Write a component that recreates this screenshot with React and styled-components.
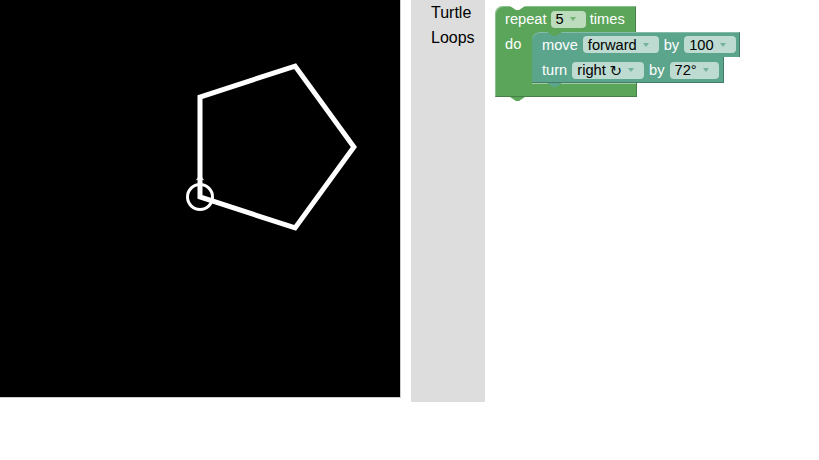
import React from "react";
import styled, { createGlobalStyle } from "styled-components";

const Global = createGlobalStyle`
  html, body { margin: 0; padding: 0; background: #fff; }
  body { font-family: "Liberation Sans", Arial, sans-serif; }
`;

const GREEN = "#5ba55b";
const TEAL = "#5ba58c";
const GREEN_FIELD = "#bddbbd";
const TEAL_FIELD = "#bddbd1";

const Page = styled.div`
  display: flex;
  align-items: flex-start;
  width: 819px;
  height: 460px;
`;

const Display = styled.div`
  width: 400px;
  height: 397px;
  background: #000;
  border-right: 1px solid #ccc;
  border-bottom: 1px solid #ccc;
  overflow: hidden;
  flex: none;
`;

const Toolbox = styled.div`
  margin-left: 10px;
  width: 74px;
  height: 402px;
  background: #ddd;
  flex: none;
  display: flex;
  flex-direction: column;
`;

const Category = styled.div`
  height: 25px;
  line-height: 25px;
  padding-left: 20px;
  font-size: 16px;
  color: #000;
`;

const Workspace = styled.div`
  position: relative;
  flex: 1;
  height: 402px;
  font-size: 14.67px;
`;

const RepeatBlock = styled.div`
  position: absolute;
  left: 10px;
  top: 6px;
  display: flex;
  flex-direction: column;
  align-items: flex-start;
`;

const notch = `polygon(0 0, 15px 0, 9px 4px, 6px 4px)`;
const tab = `polygon(0 0, 15px 0, 9px 4px, 6px 4px)`;

const Row = styled.div`
  position: relative;
  display: flex;
  align-items: center;
  gap: ${(p) => p.$gap}px;
  height: ${(p) => p.$h}px;
  padding: 0 ${(p) => p.$pr}px 0 10px;
  background: ${(p) => p.$color};
  color: #fff;
  white-space: nowrap;
  box-sizing: border-box;
`;

const TopRow = styled(Row)`
  border-radius: 8px 0 0 0;
  box-shadow: inset 1px 1px 0 rgba(255, 255, 255, 0.3), inset -1px 0 0 rgba(0, 0, 0, 0.22);
  &::before {
    content: "";
    position: absolute;
    left: 15px;
    top: 0;
    width: 15px;
    height: 4px;
    background: #fff;
    clip-path: ${notch};
  }
`;

const Middle = styled.div`
  position: relative;
  display: flex;
  align-items: stretch;
`;

const Arm = styled.div`
  position: relative;
  width: 37px;
  background: ${GREEN};
  color: #fff;
  padding-left: 10px;
  box-sizing: border-box;
  line-height: 25px;
  box-shadow: inset 1px 0 0 rgba(255, 255, 255, 0.3);
  &::after {
    content: "";
    position: absolute;
    right: -8px;
    top: 0;
    width: 8px;
    height: 8px;
    background: ${GREEN};
  }
`;

const Stack = styled.div`
  display: flex;
  flex-direction: column;
  align-items: flex-start;
`;

const StmtBlock = styled(Row)`
  z-index: 2;
  border-radius: ${(p) => (p.$first ? "8px 0 0 0" : "0")};
  box-shadow: inset -1px ${(p) => (p.$last ? "-1px" : "0")} 0 rgba(0, 0, 0, 0.25),
    inset 0 ${(p) => (p.$first ? "1px" : "0")} 0 rgba(255, 255, 255, 0.25);
  &::before {
    content: "";
    position: absolute;
    left: 15px;
    top: 0;
    width: 15px;
    height: 4px;
    background: ${(p) => p.$notch};
    clip-path: ${notch};
  }
  &::after {
    content: "";
    position: absolute;
    left: 15px;
    bottom: -4px;
    width: 15px;
    height: 4px;
    background: ${(p) => p.$color};
    clip-path: ${tab};
  }
`;

const BottomArm = styled.div`
  position: relative;
  width: ${(p) => p.$w}px;
  height: 14px;
  background: ${GREEN};
  box-shadow: inset -1px -1px 0 rgba(0, 0, 0, 0.22), inset 1px 0 0 rgba(255, 255, 255, 0.3);
  &::before {
    content: "";
    position: absolute;
    left: 37px;
    right: 1px;
    top: 0;
    height: 1px;
    background: rgba(255, 255, 255, 0.45);
  }
  &::after {
    content: "";
    position: absolute;
    left: 15px;
    bottom: -4px;
    width: 15px;
    height: 4px;
    background: ${GREEN};
    clip-path: ${tab};
  }
`;

const Label = styled.span`
  color: #fff;
`;

const Field = styled.span`
  display: inline-flex;
  align-items: center;
  height: 17px;
  padding: 0 10px 0 5px;
  border-radius: 4px;
  background: ${(p) => p.$bg};
  color: #000;
`;

const Arrow = styled.span`
  margin-left: 6px;
  width: 0;
  height: 0;
  border-left: 3.5px solid transparent;
  border-right: 3.5px solid transparent;
  border-top: 4px solid ${(p) => p.$c};
  opacity: 0.75;
`;

const Rotate = styled.span`
  font-family: "DejaVu Sans", sans-serif;
  font-size: 14.67px;
  margin-left: 4px;
`;

function Dropdown({ bg, c, children }) {
  return (
    <Field $bg={bg}>
      {children}
      <Arrow $c={c} />
    </Field>
  );
}

function Turtle() {
  const pts = [
    [200, 197],
    [200, 97],
    [295.1, 66.1],
    [353.9, 147],
    [295.1, 227.9],
  ];
  const d = "M" + pts.map((p) => p.join(",")).join(" L") + " Z";
  const x = 200,
    y = 197,
    r = 12.5;
  const W = 0.3;
  const pt = (rad, a) => [x + rad * Math.sin(a), y - rad * Math.cos(a)];
  const tip = pt(r + 10, 0);
  const left = pt(r + 4, -W);
  const lc = pt(r + 6, -W / 2);
  const rc = pt(r + 6, W / 2);
  const right = pt(r + 4, W);
  const head = `M${tip} L${left} C${lc} ${rc} ${right} Z`;
  return (
    <svg width="400" height="400" viewBox="0 0 400 400">
      <path d={d} fill="none" stroke="#fff" strokeWidth="5" strokeLinejoin="miter" />
      <circle cx={x} cy={y} r={r} fill="none" stroke="#fff" strokeWidth="3" />
      <path d={head} fill="#fff" />
    </svg>
  );
}

export default function App() {
  return (
    <>
      <Global />
      <Page>
        <Display>
          <Turtle />
        </Display>
        <Toolbox>
          <Category>Turtle</Category>
          <Category>Loops</Category>
        </Toolbox>
        <Workspace>
          <RepeatBlock>
            <TopRow $color={GREEN} $h={26} $gap={4} $pr={11}>
              <Label>repeat</Label>
              <Dropdown bg={GREEN_FIELD} c={GREEN}>5</Dropdown>
              <Label>times</Label>
            </TopRow>
            <Middle>
              <Arm>do</Arm>
              <Stack>
                <StmtBlock $color={TEAL} $notch={GREEN} $first $h={25} $gap={5} $pr={4}>
                  <Label>move</Label>
                  <Dropdown bg={TEAL_FIELD} c={TEAL}>forward</Dropdown>
                  <Label>by</Label>
                  <Dropdown bg={TEAL_FIELD} c={TEAL}>100</Dropdown>
                </StmtBlock>
                <StmtBlock $color={TEAL} $notch={TEAL} $last $h={26} $gap={5} $pr={5}>
                  <Label>turn</Label>
                  <Dropdown bg={TEAL_FIELD} c={TEAL}>
                    right<Rotate>↻</Rotate>
                  </Dropdown>
                  <Label>by</Label>
                  <Dropdown bg={TEAL_FIELD} c={TEAL}>72°</Dropdown>
                </StmtBlock>
              </Stack>
            </Middle>
            <BottomArm $w={142} />
          </RepeatBlock>
        </Workspace>
      </Page>
    </>
  );
}
